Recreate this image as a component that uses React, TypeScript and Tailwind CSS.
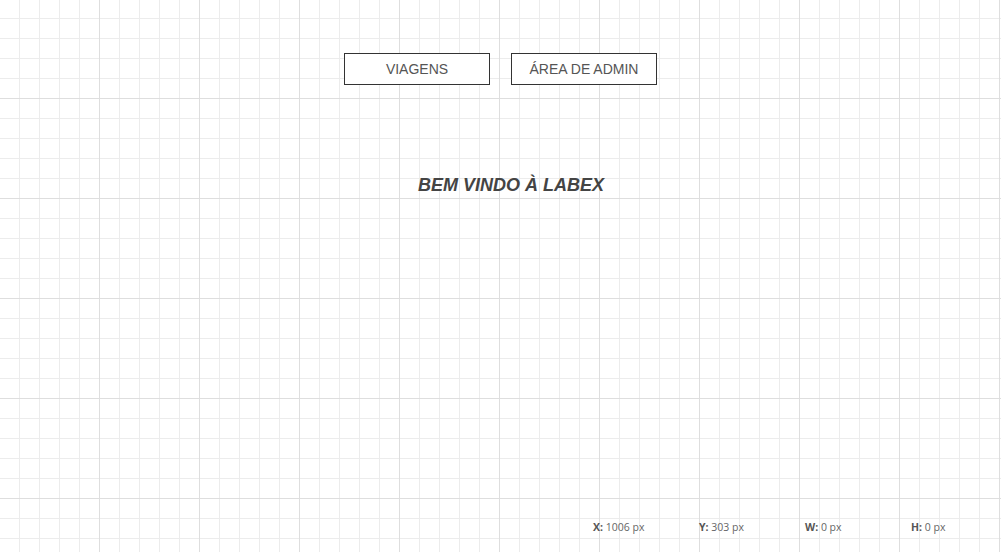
export default function App() {
  const coords = [
    { label: "X:", value: "1006 px" },
    { label: "Y:", value: "303 px" },
    { label: "W:", value: "0 px" },
    { label: "H:", value: "0 px" },
  ];

  return (
    <div
      className="relative flex h-[552px] w-full flex-col overflow-hidden bg-white [background-image:linear-gradient(to_right,#dedede_1px,transparent_1px),linear-gradient(to_bottom,#dedede_1px,transparent_1px),linear-gradient(to_right,#ececec_1px,transparent_1px),linear-gradient(to_bottom,#ececec_1px,transparent_1px)] [background-size:100px_100px,100px_100px,20px_20px,20px_20px] [background-position:99px_98px,99px_98px,19px_18px,19px_18px]"
      style={{ fontFamily: '"Liberation Sans", Arial, sans-serif' }}
    >
      <nav className="flex justify-center gap-[21px] pt-[53px]">
        <button className="h-[32px] w-[146px] border border-[#333] bg-white text-[14px] text-[#555]">
          VIAGENS
        </button>
        <button className="h-[32px] w-[146px] border border-[#333] bg-white text-[14px] text-[#555]">
          ÁREA DE ADMIN
        </button>
      </nav>

      <h1 className="mt-[90px] flex justify-center pl-[21px] text-[18px] leading-[21px] font-bold italic text-[#444]">
        BEM VINDO À LABEX
      </h1>

      <div className="mt-auto flex h-[54px] items-center pt-[6px] pl-[593px] font-['Open_Sans',sans-serif] text-[10.5px] text-[#666]">
        {coords.map((c) => (
          <div key={c.label} className="w-[106px] shrink-0 whitespace-nowrap">
            <span className="font-bold text-[#555]">{c.label}</span> {c.value}
          </div>
        ))}
      </div>
    </div>
  );
}
